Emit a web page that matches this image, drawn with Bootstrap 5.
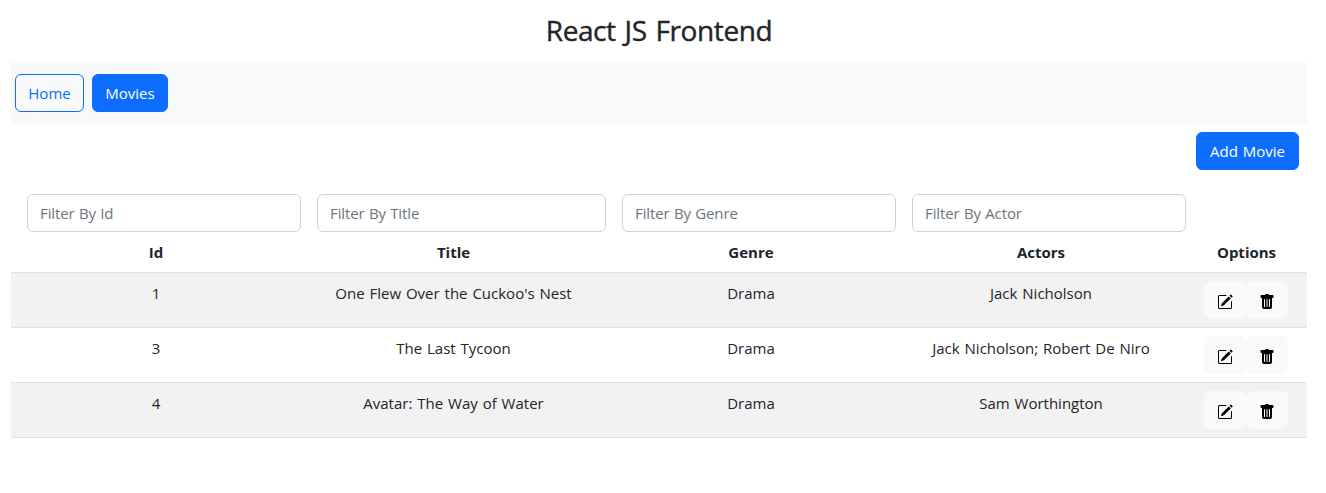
<!DOCTYPE html>
<html lang="en">
<head>
<meta charset="utf-8">
<title>React JS Frontend</title>
<link href="https://cdn.jsdelivr.net/npm/bootstrap@5.3.0/dist/css/bootstrap.min.css" rel="stylesheet">
<style>
  body { font-family: "Segoe UI", "Open Sans", "Noto Sans", sans-serif; }
  .page { width: 1296px; margin-left: 11px; }
  .page-title { font-size: 28px; line-height: 34px; padding: 13px 0 15px; letter-spacing: -.4px; word-spacing: 2px; -webkit-text-stroke: .4px currentColor; }
  .btn, .form-control, .movies td, .movies th { font-size: 15px; word-spacing: 1px; line-height: 24px; }
  .form-control { border-color: #ced4da; letter-spacing: -.1px; word-spacing: .5px; }
  .form-control::placeholder { color: #6c757d; }
  .top-nav { height: 62px; padding-left: 4px; }
  .btn-home { width: 69px; }
  .btn-movies { width: 76px; }
  .btn-add { width: 103px; }
  .btn-home, .btn-movies, .btn-add { padding-left: 0; padding-right: 0; }
  .movies { table-layout: fixed; width: 1296px; }
  .filter .form-control { flex: 0 0 100%; }
  .options { margin-right: 1px; }
  .btn-icon { height: 38px; }
  .btn-icon svg { display: block; margin-top: 4px; }
</style>
</head>
<body>
<div class="page">
  <h3 class="page-title text-center mb-0">React JS Frontend</h3>
  <nav class="top-nav bg-light d-flex align-items-center gap-2">
    <a class="btn btn-outline-primary btn-home" href="#">Home</a>
    <a class="btn btn-primary btn-movies" href="#">Movies</a>
  </nav>
  <div class="d-flex justify-content-end p-2">
    <button type="button" class="btn btn-primary btn-add">Add Movie</button>
  </div>
  <table class="movies table table-striped text-center mb-0">
    <colgroup><col style="width:290px"><col style="width:305px"><col style="width:290px"><col style="width:290px"><col style="width:121px"></colgroup>
    <thead>
      <tr class="align-bottom">
        <th><div class="filter d-flex"><input class="form-control m-2" placeholder="Filter By Id"></div>Id</th>
        <th><div class="filter d-flex"><input class="form-control m-2" placeholder="Filter By Title"></div>Title</th>
        <th><div class="filter d-flex"><input class="form-control m-2" placeholder="Filter By Genre"></div>Genre</th>
        <th><div class="filter d-flex"><input class="form-control m-2" placeholder="Filter By Actor"></div>Actors</th>
        <th>Options</th>
      </tr>
    </thead>
    <tbody id="rows"></tbody>
  </table>
</div>
<script src="https://cdn.jsdelivr.net/npm/bootstrap@5.3.0/dist/js/bootstrap.bundle.min.js"></script>
<script>
  const movies = [
    [1, "One Flew Over the Cuckoo's Nest", "Drama", "Jack Nicholson"],
    [3, "The Last Tycoon", "Drama", "Jack Nicholson; Robert De Niro"],
    [4, "Avatar: The Way of Water", "Drama", "Sam Worthington"]
  ];
  const edit = '<svg width="16" height="16" fill="#000" viewBox="0 0 16 16"><path d="M15.502 1.94a.5.5 0 0 1 0 .706L14.459 3.69l-2-2L13.502.646a.5.5 0 0 1 .707 0l1.293 1.293zm-1.75 2.456-2-2L4.939 9.21a.5.5 0 0 0-.121.196l-.805 2.414a.25.25 0 0 0 .316.316l2.414-.805a.5.5 0 0 0 .196-.12l6.813-6.814z"/><path fill-rule="evenodd" d="M1 13.500A1.500 1.500 0 0 0 2.500 15h11a1.500 1.500 0 0 0 1.500-1.500v-6a.5.5 0 0 0-1 0v6a.5.5 0 0 1-.5.5h-11a.5.5 0 0 1-.5-.5v-11a.5.5 0 0 1 .5-.5H9a.5.5 0 0 0 0-1H2.500A1.500 1.500 0 0 0 1 2.500v11z"/></svg>';
  const trash = '<svg width="16" height="16" fill="#000" viewBox="0 0 16 16"><path d="M2.500 1a1 1 0 0 0-1 1v1a1 1 0 0 0 1 1H3v9a2 2 0 0 0 2 2h6a2 2 0 0 0 2-2V4h.5a1 1 0 0 0 1-1V2a1 1 0 0 0-1-1H10a1 1 0 0 0-1-1H7a1 1 0 0 0-1 1H2.500zm3 4a.5.5 0 0 1 .5.5v7a.5.5 0 0 1-1 0v-7a.5.5 0 0 1 .5-.5zM8 5a.5.5 0 0 1 .5.5v7a.5.5 0 0 1-1 0v-7A.5.5 0 0 1 8 5zm3 .5v7a.5.5 0 0 1-1 0v-7a.5.5 0 0 1 1 0z"/></svg>';
  document.getElementById("rows").innerHTML = movies.map(m =>
    `<tr>${m.map(v => `<td>${v}</td>`).join("")}<td><div class="options d-flex justify-content-center"><button type="button" class="btn btn-light btn-icon" aria-label="Edit">${edit}</button><button type="button" class="btn btn-light btn-icon" aria-label="Delete">${trash}</button></div></td></tr>`).join("");
</script>
</body>
</html>
